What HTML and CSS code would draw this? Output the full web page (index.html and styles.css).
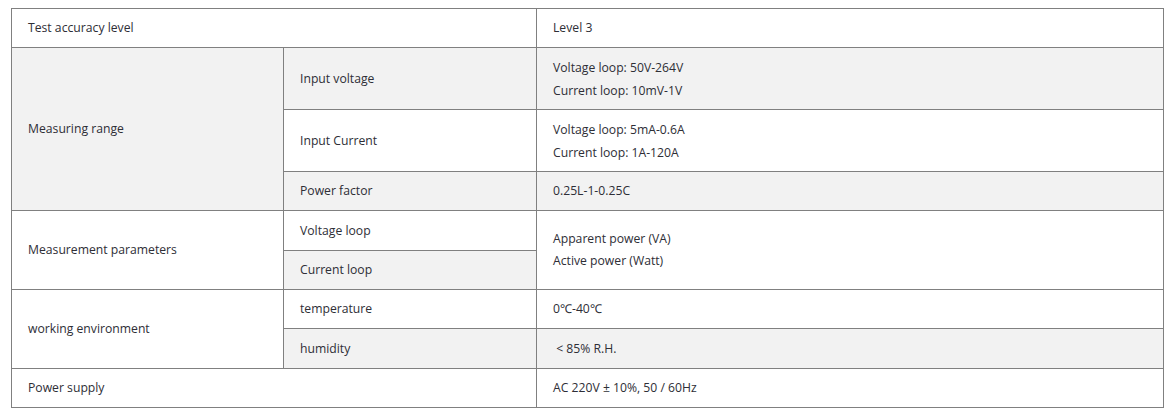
FILE: index.html
```html
<!DOCTYPE html>
<html>
<head>
<meta charset="utf-8">
<link rel="stylesheet" href="styles.css">
</head>
<body>
<table class="spec">
  <colgroup>
    <col class="c1">
    <col class="c2">
    <col class="c3">
  </colgroup>
  <tr class="r39">
    <td colspan="2">Test accuracy level</td>
    <td>Level 3</td>
  </tr>
  <tr class="r62">
    <td rowspan="3" class="shade">Measuring range</td>
    <td class="shade">Input voltage</td>
    <td class="shade"><div>Voltage loop: 50V-264V</div><div>Current loop: 10mV-1V</div></td>
  </tr>
  <tr class="r62">
    <td>Input Current</td>
    <td><div>Voltage loop: 5mA-0.6A</div><div>Current loop: 1A-120A</div></td>
  </tr>
  <tr class="r39">
    <td class="shade">Power factor</td>
    <td class="shade">0.25L-1-0.25C</td>
  </tr>
  <tr class="r40">
    <td rowspan="2">Measurement parameters</td>
    <td>Voltage loop</td>
    <td rowspan="2"><div>Apparent power (VA)</div><div>Active power (Watt)</div></td>
  </tr>
  <tr class="r39">
    <td class="shade">Current loop</td>
  </tr>
  <tr class="r39">
    <td rowspan="2">working environment</td>
    <td>temperature</td>
    <td>0℃-40℃</td>
  </tr>
  <tr class="r40">
    <td class="shade">humidity</td>
    <td class="shade">&nbsp;&lt; 85% R.H.</td>
  </tr>
  <tr class="r39">
    <td colspan="2">Power supply</td>
    <td>AC 220V ± 10%, 50 / 60Hz</td>
  </tr>
</table>
</body>
</html>
```

FILE: styles.css
```css
html, body {
  margin: 0;
  padding: 0;
  background: #ffffff;
}
body {
  padding: 8px 0 0 11px;
  font-family: "Open Sans", "Liberation Sans", sans-serif;
  font-size: 12.2px;
  color: #2e2e36;
}
.spec {
  border-collapse: collapse;
  table-layout: fixed;
  width: 1152px;
}
.c1 { width: 272px; }
.c2 { width: 253px; }
.c3 { width: 627px; }
.spec td {
  border: 1px solid #808080;
  padding: 0 16px;
  vertical-align: middle;
  line-height: 22px;
}
.spec .shade {
  background: #f2f2f2;
}
.r39 td { height: 38px; }
.r40 td { height: 39px; }
.r62 td { height: 61px; }
.r62 td div { line-height: 23px; }
```
